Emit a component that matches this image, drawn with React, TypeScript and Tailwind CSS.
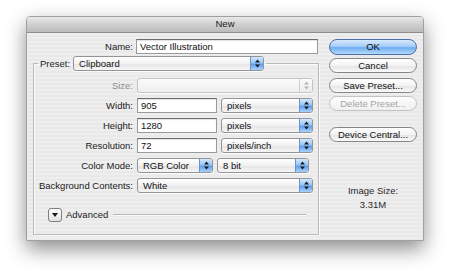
import React from 'react';

const font = { fontFamily: '"Liberation Sans", Arial, sans-serif' };

function Arrows({ disabled }: { disabled?: boolean }) {
  return (
    <svg width="5" height="9" viewBox="0 0 5 9">
      <path d="M2.5 0.5 L5 3.5 L0 3.5 Z" fill={disabled ? '#b5b5b5' : '#1b1b1b'} />
      <path d="M0 5.5 L5 5.5 L2.5 8.5 Z" fill={disabled ? '#b5b5b5' : '#1b1b1b'} />
    </svg>
  );
}

function Select({ value, width, disabled }: { value?: string; width: string; disabled?: boolean }) {
  return (
    <div
      className={cn(
        'flex h-[15px] items-stretch rounded-[3px] border shadow-[0_1px_0_rgba(255,255,255,0.8)]',
        width,
        disabled
          ? 'border-[#c4c4c4] bg-[linear-gradient(#fafafa,#efefef)]'
          : 'border-[#949494] bg-[linear-gradient(#ffffff,#f1f1f1_50%,#e4e4e4_51%,#f6f6f6)]'
      )}
    >
      <div className="flex flex-1 items-center pl-[5px] text-[9.5px] leading-none text-[#111]">{value}</div>
      <div
        className={cn(
          'flex w-[13px] items-center justify-center rounded-r-[2px] border-l',
          disabled
            ? 'border-[#d0d0d0] bg-[linear-gradient(#fbfbfb,#ececec)]'
            : 'border-[#6e92c6] bg-[linear-gradient(#d2e7fd,#9ac7f7_45%,#5e9cec_55%,#a9d3fb)]'
        )}
      >
        <Arrows disabled={disabled} />
      </div>
    </div>
  );
}

function TextInput({ value, width }: { value: string; width: string }) {
  return (
    <div
      className={cn(
        'flex h-[15px] items-center border border-[#9a9a9a] border-t-[#6c6c6c] bg-white pl-[3px] text-[9.5px] leading-none text-[#111] shadow-[inset_0_1px_1px_rgba(0,0,0,0.12)]',
        width
      )}
    >
      {value}
    </div>
  );
}

function AquaButton({ label, primary, disabled, className }: { label: string; primary?: boolean; disabled?: boolean; className?: string }) {
  return (
    <div
      className={cn(
        'flex h-[15px] w-[88px] items-center justify-center rounded-full border text-[9.5px] leading-none',
        primary
          ? 'border-[#4d6fa8] bg-[linear-gradient(#d6e9fd,#a6cdf8_45%,#71adf0_55%,#b4dafd)] text-[#0d0d0d]'
          : disabled
          ? 'border-[#c3c3c3] bg-[linear-gradient(#fdfdfd,#f0f0f0)] text-[#a4a4a4]'
          : 'border-[#858585] bg-[linear-gradient(#ffffff,#f3f3f3_50%,#e3e3e3_51%,#fafafa)] text-[#111]',
        className
      )}
    >
      {label}
    </div>
  );
}

function Row({ label, children, muted }: { label: string; children: React.ReactNode; muted?: boolean }) {
  return (
    <div className="flex h-[15px] items-center">
      <div className={cn('w-[102px] pr-[3px] text-right text-[9.5px] leading-none', muted ? 'text-[#8c8c8c]' : 'text-[#1a1a1a]')}>
        {label}
      </div>
      <div className="ml-[1px] flex gap-[4px]">{children}</div>
    </div>
  );
}

export default function App() {
  return (
    <div className="h-[278px] w-[450px] overflow-hidden bg-white pl-[26px] pt-[16px]" style={font}>
      <div className="flex h-[225px] w-[398px] flex-col overflow-hidden rounded-t-[4px] border border-[#a0a0a0] bg-[repeating-linear-gradient(#eeeeee_0px,#eeeeee_2px,#e9e9e9_2px,#e9e9e9_4px)] shadow-[0_8px_20px_rgba(0,0,0,0.45)]">
        <div className="flex h-[16px] items-center justify-center border-b border-[#8d8d8d] bg-[linear-gradient(#e9e9e9,#cfcfcf_50%,#bcbcbc)] text-[9.5px] text-[#222]">
          New
        </div>
        <div className="flex flex-1 pl-[6px] pt-[6px]">
          <div className="flex w-[286px] flex-col">
            <div className="flex h-[15px] items-center">
              <div className="w-[103px] pr-[3px] text-right text-[9.5px] leading-none text-[#1a1a1a]">Name:</div>
              <TextInput value="Vector Illustration" width="w-[182px]" />
            </div>
            <fieldset className="mt-[2px] h-[179px] border border-[#b9b9b9] shadow-[inset_1px_1px_0_rgba(255,255,255,0.7),1px_1px_0_rgba(255,255,255,0.7)]">
              <legend className="ml-[4px] px-[2px]">
                <div className="flex h-[15px] items-center">
                  <span className="pr-[3px] text-[9.5px] leading-none text-[#1a1a1a]">Preset:</span>
                  <Select value="Clipboard" width="w-[191px]" />
                </div>
              </legend>
              <div className="flex flex-col gap-[5px] pt-[7px]">
                <Row label="Size:" muted>
                  <Select width="w-[176px]" disabled />
                </Row>
                <Row label="Width:">
                  <TextInput value="905" width="w-[80px]" />
                  <Select value="pixels" width="w-[92px]" />
                </Row>
                <Row label="Height:">
                  <TextInput value="1280" width="w-[80px]" />
                  <Select value="pixels" width="w-[92px]" />
                </Row>
                <Row label="Resolution:">
                  <TextInput value="72" width="w-[80px]" />
                  <Select value="pixels/inch" width="w-[92px]" />
                </Row>
                <Row label="Color Mode:">
                  <Select value="RGB Color" width="w-[76px]" />
                  <Select value="8 bit" width="w-[92px]" />
                </Row>
                <Row label="Background Contents:">
                  <Select value="White" width="w-[176px]" />
                </Row>
              </div>
              <div className="mt-[14px] flex h-[15px] items-center pl-[14px] pr-[12px]">
                <div className="flex h-[14px] w-[14px] items-center justify-center rounded-[3px] border border-[#7f7f7f] bg-[linear-gradient(#ffffff,#e2e2e2)]">
                  <svg width="6" height="4" viewBox="0 0 6 4">
                    <path d="M0 0 L6 0 L3 4 Z" fill="#1b1b1b" />
                  </svg>
                </div>
                <span className="ml-[4px] text-[9.5px] leading-none text-[#1a1a1a]">Advanced</span>
                <div className="ml-[5px] h-px flex-1 bg-[#b5b5b5] shadow-[0_1px_0_rgba(255,255,255,0.8)]" />
              </div>
            </fieldset>
          </div>
          <div className="ml-[10px] flex w-[88px] flex-col items-center">
            <AquaButton label="OK" primary className="h-[16px]" />
            <AquaButton label="Cancel" className="mt-[3px]" />
            <AquaButton label="Save Preset..." className="mt-[5px]" />
            <AquaButton label="Delete Preset..." disabled className="mt-[3px]" />
            <AquaButton label="Device Central..." className="mt-[16px]" />
            <div className="mt-[42px] text-[9.5px] leading-[13px] text-[#2a2a2a]">Image Size:</div>
            <div className="mt-[1px] text-[9.5px] leading-[13px] text-[#2a2a2a]">3.31M</div>
          </div>
        </div>
      </div>
    </div>
  );
}

function cn(...inputs: any[]) {
  return inputs.filter(Boolean).join(' ');
}
